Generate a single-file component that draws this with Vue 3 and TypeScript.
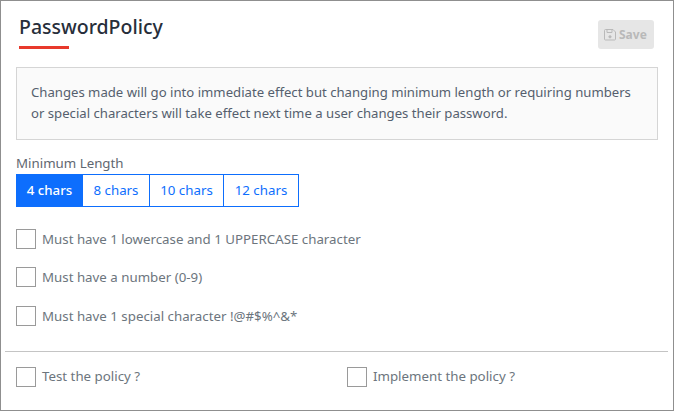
<template>
  <div class="card">
    <header class="head">
      <div class="title-wrap">
        <h2 class="title">PasswordPolicy</h2>
        <div class="title-bar"></div>
      </div>
      <button class="save" type="button" disabled>
        <svg width="12" height="12" viewBox="0 0 12 12" fill="none" stroke="currentColor" stroke-width="1">
          <path d="M1.5.5h7.5l2.5 2.5v7a1 1 0 0 1-1 1h-9a1 1 0 0 1-1-1v-8.500a1 1 0 0 1 1-1z" />
          <path d="M3 .5v3h5v-3" />
          <circle cx="6" cy="7.800" r="1.100" fill="currentColor" />
        </svg>
        Save
      </button>
    </header>

    <p class="notice">
      Changes made will go into immediate effect but changing minimum length or requiring numbers
      or special characters will take effect next time a user changes their password.
    </p>

    <div class="min-label">Minimum Length</div>
    <div class="lengths">
      <button v-for="opt in lengths" :key="opt.value" type="button"
        :class="['len-btn', { active: opt.value === minLength }]" :style="{ width: opt.width + 'px' }"
        @click="minLength = opt.value">
        {{ opt.value }} chars
      </button>
    </div>

    <ul class="rules">
      <li v-for="rule in rules" :key="rule" class="check-row">
        <span class="box"></span>
        <span>{{ rule }}</span>
      </li>
    </ul>

    <hr class="divider" />

    <footer class="foot">
      <div class="check-row"><span class="box"></span><span class="foot-label">Test the policy ?</span></div>
      <div class="check-row"><span class="box"></span><span class="foot-label">Implement the policy ?</span></div>
    </footer>
  </div>
</template>

<script setup lang="ts">
import { ref } from 'vue';

const minLength = ref(4);

const lengths = [
  { value: 4, width: 67 },
  { value: 8, width: 67 },
  { value: 10, width: 74 },
  { value: 12, width: 75 },
];

const rules = [
  'Must have 1 lowercase and 1 UPPERCASE character',
  'Must have a number (0-9)',
  'Must have 1 special character !@#$%^&*',
];
</script>

<style>
html,
body {
  background: #fff;
}
</style>

<style scoped>
.card {
  box-sizing: border-box;
  width: 674px;
  height: 411px;
  border: 1px solid #8f8f8f;
  padding: 0 15px;
  font-family: "Noto Sans", "Open Sans", sans-serif;
  font-size: 13.300px;
  color: #6c757d;
}

.head {
  display: flex;
  justify-content: space-between;
  align-items: flex-start;
  padding: 13px 4px 0 3px;
  height: 66px;
  box-sizing: border-box;
}

.title {
  margin: 0;
  font-size: 19.500px;
  font-weight: 500;
  line-height: 26px;
  color: #272e3a;
}

.title-bar {
  width: 50px;
  height: 3px;
  margin-top: 6px;
  background: #e8392c;
}

.save {
  display: flex;
  align-items: center;
  gap: 3px;
  width: 56px;
  height: 29px;
  margin-top: 6px;
  padding: 0 0 0 6px;
  border: 0;
  border-radius: 3px;
  background: #e6e6e6;
  color: #b9b9b9;
  font: 700 12px "Noto Sans", sans-serif;
}

.notice {
  box-sizing: border-box;
  margin: 0;
  height: 73px;
  padding: 14px 10px 14px 14px;
  border: 1px solid #d5d5d5;
  background: #fafafa;
  font-size: 13.150px;
  line-height: 21px;
  color: #555f6e;
}

.min-label {
  margin-top: 13px;
  line-height: 20px;
  color: #5f6770;
}

.lengths {
  display: flex;
  margin-top: 1px;
}

.len-btn {
  box-sizing: border-box;
  height: 33px;
  padding: 0 0 2px;
  border: 1px solid #0d6efd;
  border-left-width: 0;
  background: #fff;
  color: #0d6efd;
  font: inherit;
}

.len-btn:first-child {
  border-left-width: 1px;
}

.len-btn.active {
  background: #0d6efd;
  color: #fff;
  font-weight: 500;
}

.rules {
  list-style: none;
  margin: 22px 0 0;
  padding: 0;
  display: flex;
  flex-direction: column;
  gap: 18px;
}

.rules .check-row:last-child {
  margin-top: 1px;
}

.check-row {
  display: flex;
  align-items: center;
  gap: 6px;
  height: 20px;
}

.box {
  box-sizing: border-box;
  width: 20px;
  height: 20px;
  border: 1px solid #9a9a9a;
  background: #fff;
}

.divider {
  margin: 25px -10px 0 -11px;
  border: 0;
  border-top: 1px solid #c4c4c4;
}

.foot {
  display: grid;
  grid-template-columns: 331px 1fr;
  margin-top: 15px;
}

.foot-label {
  padding-bottom: 2px;
}
</style>
